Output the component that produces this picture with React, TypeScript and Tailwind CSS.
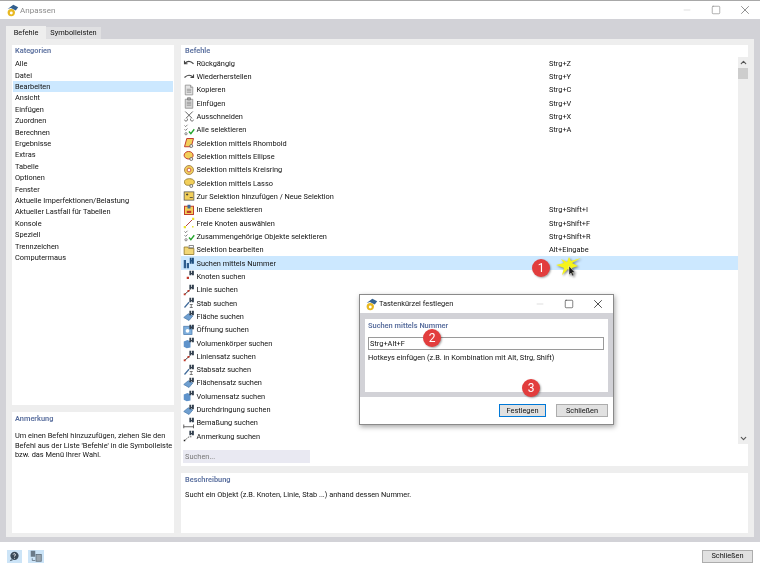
import React from "react";
import { X, Minus, Square, ChevronUp, ChevronDown } from "lucide-react";

const kategorien = [
  "Alle",
  "Datei",
  "Bearbeiten",
  "Ansicht",
  "Einfügen",
  "Zuordnen",
  "Berechnen",
  "Ergebnisse",
  "Extras",
  "Tabelle",
  "Optionen",
  "Fenster",
  "Aktuelle Imperfektionen/Belastung",
  "Aktueller Lastfall für Tabellen",
  "Konsole",
  "Speziell",
  "Trennzeichen",
  "Computermaus",
];

const befehle: [string, string, string][] = [
  ["undo", "Rückgängig", "Strg+Z"],
  ["redo", "Wiederherstellen", "Strg+Y"],
  ["copy", "Kopieren", "Strg+C"],
  ["paste", "Einfügen", "Strg+V"],
  ["cut", "Ausschneiden", "Strg+X"],
  ["check", "Alle selektieren", "Strg+A"],
  ["rhomb", "Selektion mittels Rhomboid", ""],
  ["ellipse", "Selektion mittels Ellipse", ""],
  ["ring", "Selektion mittels Kreisring", ""],
  ["lasso", "Selektion mittels Lasso", ""],
  ["add", "Zur Selektion hinzufügen / Neue Selektion", ""],
  ["plane", "In Ebene selektieren", "Strg+Shift+I"],
  ["free", "Freie Knoten auswählen", "Strg+Shift+F"],
  ["check", "Zusammengehörige Objekte selektieren", "Strg+Shift+R"],
  ["edit", "Selektion bearbeiten", "Alt+Eingabe"],
  ["num", "Suchen mittels Nummer", ""],
  ["node", "Knoten suchen", ""],
  ["line", "Linie suchen", ""],
  ["bar", "Stab suchen", ""],
  ["face", "Fläche suchen", ""],
  ["open", "Öffnung suchen", ""],
  ["solid", "Volumenkörper suchen", ""],
  ["line", "Liniensatz suchen", ""],
  ["bar", "Stabsatz suchen", ""],
  ["face", "Flächensatz suchen", ""],
  ["solid", "Volumensatz suchen", ""],
  ["face", "Durchdringung suchen", ""],
  ["dim", "Bemaßung suchen", ""],
  ["note", "Anmerkung suchen", ""],
];

const Logo = () => (
  <svg width="13" height="13" viewBox="0 0 16 16">
    <circle cx="6.5" cy="10.5" r="4.5" fill="#e8b820" />
    <circle cx="6.5" cy="11" r="1.8" fill="#fff" />
    <path d="M2 6 L9 1 L15 4 L12 8 L6 5 Z" fill="#34618f" />
  </svg>
);

const Binoc = () => (
  <path d="M8.5 1h2.5v3h1V1h2.5v6h-2.5V5.5h-1V7H8.5z" fill="#33404f" />
);

const Icon: React.FC<{ kind: string }> = ({ kind }) => {
  const shape = () => {
    switch (kind) {
      case "undo":
        return <path d="M2 5v4h4M2.5 8.5C6 5 10 5 14 9" fill="none" stroke="#444" strokeWidth="1.5" />;
      case "redo":
        return <path d="M14 6v4h-4M13.5 9.5C10 6 6 6 2 10" fill="none" stroke="#444" strokeWidth="1.5" />;
      case "copy":
        return <path d="M3 1.5h7l3 3v10H3z M10 1.5v3h3 M5 7h6M5 9h6M5 11h6" fill="#e4e4e4" stroke="#8a8a8a" />;
      case "paste":
        return (
          <>
            <path d="M3 3h10v12H3z" fill="#d8d8d8" stroke="#8a8a8a" />
            <path d="M6 1h4v3H6z" fill="#aaa" stroke="#777" />
            <path d="M5 7h6M5 9h6M5 11h6" stroke="#888" />
          </>
        );
      case "cut":
        return <path d="M3 2l9 9M13 2L4 11M2 13a2 2 0 1 0 3-2M14 13a2 2 0 1 1-3-2" fill="none" stroke="#555" strokeWidth="1.2" />;
      case "check":
        return (
          <>
            <path d="M2 2l1.5 1.5L6 1M2 7l1.5 1.5L6 6" fill="none" stroke="#555" />
            <circle cx="4" cy="13" r="1.5" fill="none" stroke="#666" />
            <path d="M8 10l2.5 3L15 7" fill="none" stroke="#22a52a" strokeWidth="1.8" />
          </>
        );
      case "rhomb":
        return (
          <>
            <path d="M5 2h9l-3 11H2z" fill="#f2cf5a" stroke="#c0392b" strokeWidth="1.3" />
            <circle cx="11" cy="12" r="2" fill="#eee" stroke="#555" />
          </>
        );
      case "ellipse":
        return (
          <>
            <ellipse cx="7.5" cy="7" rx="6" ry="5" fill="#f2cf5a" stroke="#c0392b" strokeWidth="1.3" />
            <circle cx="11" cy="12" r="2" fill="#eee" stroke="#555" />
          </>
        );
      case "ring":
        return (
          <>
            <circle cx="8" cy="8" r="6" fill="#f2cf5a" stroke="#a85" strokeWidth="1.3" />
            <circle cx="8" cy="8" r="2.5" fill="#fff" stroke="#c0392b" />
          </>
        );
      case "lasso":
        return (
          <>
            <path d="M2 6c0-4 9-5 12-2s0 7-4 7-8 1-8-5z" fill="#f2cf5a" stroke="#998030" strokeWidth="1.2" />
            <circle cx="11" cy="12" r="2" fill="#eee" stroke="#555" />
          </>
        );
      case "add":
        return (
          <>
            <rect x="1.5" y="2.5" width="13" height="11" fill="#f2cf5a" stroke="#555" />
            <path d="M4 6h3M5.5 4.5v3M9 10h4" stroke="#333" />
          </>
        );
      case "plane":
        return (
          <>
            <rect x="2" y="3" width="12" height="11" fill="#f2cf5a" stroke="#c0392b" strokeWidth="1.3" />
            <rect x="6" y="1" width="4" height="5" fill="#3f6a9a" />
            <path d="M5 9h6v3H5z" fill="#c0392b" />
          </>
        );
      case "free":
        return (
          <>
            <path d="M3 13L13 3" stroke="#a33" strokeWidth="1.2" />
            <rect x="1" y="12" width="3" height="3" fill="#e8e030" />
            <rect x="12" y="1" width="3" height="3" fill="#e8e030" />
            <rect x="12" y="12" width="2" height="2" fill="#e8e030" />
          </>
        );
      case "edit":
        return (
          <>
            <path d="M1.5 4h5l1 2h7v8h-13z" fill="#f2d777" stroke="#8a7020" />
            <path d="M8 2h6v3H8z" fill="#fff" stroke="#666" />
          </>
        );
      case "num":
        return (
          <>
            <path d="M1 4h3v11H1zM5 8h3v7H5z" fill="#2d5d8e" />
            <path d="M9 1h2.5v3h.5V1h2.5v8H12V6h-.5v3H9z" fill="#1d4d7e" />
          </>
        );
      case "node":
        return (
          <>
            <Binoc />
            <rect x="5" y="9" width="3" height="3" fill="#c0392b" />
          </>
        );
      case "line":
        return (
          <>
            <Binoc />
            <path d="M2 14L10 7" stroke="#333" strokeWidth="1.2" />
            <rect x="1" y="12.5" width="2.5" height="2.5" fill="#c0392b" />
            <rect x="6" y="8" width="2.5" height="2.5" fill="#c0392b" />
          </>
        );
      case "bar":
        return (
          <>
            <Binoc />
            <path d="M2 14L8 7" stroke="#3f6a9a" strokeWidth="1.6" />
            <path d="M9 10h4M11 10v4M9 14h4" stroke="#555" />
          </>
        );
      case "face":
        return (
          <>
            <path d="M1 10l6-5 6 3-5 6z" fill="#6f9fd0" stroke="#4c7cae" />
            <Binoc />
          </>
        );
      case "open":
        return (
          <>
            <rect x="1" y="3" width="11" height="11" fill="#7fb0de" stroke="#4c7cae" />
            <circle cx="6" cy="9" r="2.5" fill="#fff" />
            <Binoc />
          </>
        );
      case "solid":
        return (
          <>
            <path d="M1 6l5-2 4 2v8l-5 1-4-2z" fill="#5f93cb" />
            <Binoc />
          </>
        );
      case "dim":
        return (
          <>
            <Binoc />
            <path d="M1 13h13M1 10v5M14 10v5" stroke="#333" />
          </>
        );
      case "note":
        return (
          <>
            <Binoc />
            <path d="M2 14L8 9h4" fill="none" stroke="#333" strokeDasharray="2 1" />
            <rect x="1" y="13" width="2" height="2" fill="#222" />
          </>
        );
      default:
        return null;
    }
  };
  return (
    <svg width="12" height="12" viewBox="0 0 16 16" className="shrink-0">
      {shape()}
    </svg>
  );
};

const Badge: React.FC<{ n: number; className: string }> = ({ n, className }) => (
  <div
    className={`absolute w-[18px] h-[18px] rounded-full bg-[#e23d3d] text-white text-[12px] flex items-center justify-center shadow-[1px_1px_2px_rgba(0,0,0,0.35)] ${className}`}
  >
    {n}
  </div>
);

const Heading: React.FC<{ children: React.ReactNode }> = ({ children }) => (
  <div className="text-[#5a6f9e] font-semibold leading-[10px]">{children}</div>
);

const Button: React.FC<{ label: string; className?: string }> = ({ label, className }) => (
  <div
    className={`h-[13px] flex items-center justify-center bg-[#e1e1e1] border border-[#adadad] text-[#111] ${className ?? ""}`}
  >
    {label}
  </div>
);

export default function App() {
  return (
    <div className="relative w-[760px] h-[570px] overflow-hidden flex flex-col bg-[#d2d2d7] text-[7.4px] text-[#111] font-['Roboto',sans-serif] border-t border-[#a8a8a8] blur-[0.25px]">
      <div className="h-[18px] bg-white flex items-center pl-[6px] shrink-0">
        <Logo />
        <span className="ml-[1px] mt-px text-[#8c8c8c] text-[8px]">Anpassen</span>
        <div className="ml-auto flex items-center pr-[8px] text-[#8a8a8a]">
          <Minus size={10} className="text-[#d8d8d8]" />
          <Square size={10} strokeWidth={1.6} className="ml-[19px]" />
          <X size={14} strokeWidth={1.6} className="ml-[17px]" />
        </div>
      </div>

      <div className="flex items-end pl-[6px] pt-[7px] shrink-0">
        <div className="w-[40px] h-[13px] bg-[#eeeeee] flex items-center justify-center">Befehle</div>
        <div className="w-[55px] h-[12px] bg-[#e0e0e2] flex items-center justify-center">Symbolleisten</div>
      </div>

      <div className="ml-[6px] mr-[6px] bg-[#eeeeee] h-[498px] shrink-0 pl-[6px] pr-[6px] pt-[6px] pb-[4px] flex gap-[7px]">
        <div className="w-[162px] flex flex-col gap-[7px]">
          <div className="h-[360px] bg-white pt-px">
            <div className="pl-[3px] mb-[2px]">
              <Heading>Kategorien</Heading>
            </div>
            <div className="px-px">
              {kategorien.map((k) => (
                <div
                  key={k}
                  className={`h-[11.41px] flex items-center pl-[2px] ${k === "Bearbeiten" ? "bg-[#cce8ff]" : ""}`}
                >
                  {k}
                </div>
              ))}
            </div>
          </div>
          <div className="flex-1 bg-white px-[3px] pt-[2px]">
            <Heading>Anmerkung</Heading>
            <div className="mt-[7px] leading-[9.7px] whitespace-nowrap">
              Um einen Befehl hinzuzufügen, ziehen Sie den
              <br />
              Befehl aus der Liste 'Befehle' in die Symbolleiste
              <br />
              bzw. das Menü Ihrer Wahl.
            </div>
          </div>
        </div>

        <div className="flex-1 flex flex-col gap-[7px]">
          <div className="h-[421px] bg-white relative flex flex-col">
            <div className="pl-[4px] pt-px mb-[0.5px]">
              <Heading>Befehle</Heading>
            </div>
            <div className="flex flex-1 min-h-0">
              <div className="w-[557px]">
                {befehle.map(([icon, name, key]) => (
                  <div
                    key={name}
                    className={`h-[13.33px] flex items-center pl-[2px] ${name === "Suchen mittels Nummer" ? "bg-[#cce8ff]" : ""}`}
                  >
                    <Icon kind={icon} />
                    <span className="ml-[1.5px] w-[352.5px]">{name}</span>
                    <span>{key}</span>
                  </div>
                ))}
              </div>
              <div className="w-[10px] h-[387px] bg-[#eeeeee] flex flex-col items-center">
                <div className="h-[11px] flex items-center shrink-0">
                  <ChevronUp size={9} strokeWidth={3} className="text-[#555]" />
                </div>
                <div className="w-[10px] h-[11px] bg-[#cdcdcd] shrink-0" />
                <div className="h-[11px] flex items-center mt-auto shrink-0">
                  <ChevronDown size={9} strokeWidth={3} className="text-[#555]" />
                </div>
              </div>
            </div>
            <div className="absolute left-[2px] bottom-[3px] w-[127px] h-[13px] bg-[#e9e9f2] text-[#777] flex items-center pl-[2px]">
              Suchen...
            </div>
          </div>
          <div className="flex-1 bg-white px-[4px] pt-[2px]">
            <Heading>Beschreibung</Heading>
            <div className="mt-[5px] leading-[10px]">Sucht ein Objekt (z.B. Knoten, Linie, Stab ...) anhand dessen Nummer.</div>
          </div>
        </div>
      </div>

      <div className="flex-1 mt-[5px] bg-white flex items-center pl-[7px] pr-[7px]">
        <div className="w-[15px] h-[13px] bg-[#cce4f7] flex items-center justify-center">
          <svg width="11" height="11" viewBox="0 0 16 16">
            <circle cx="8" cy="7" r="6" fill="#3b4a58" />
            <path d="M3 12l-2 3 5-2z" fill="#3b4a58" />
            <path d="M6 5c1-2 4-1 3 1l-1 2M8 10v1" stroke="#fff" strokeWidth="1.4" fill="none" />
          </svg>
        </div>
        <div className="ml-[6px] w-[16px] h-[13px] bg-[#cce4f7] flex items-center justify-center">
          <svg width="12" height="12" viewBox="0 0 16 16">
            <rect x="1" y="1" width="6" height="8" fill="#6a7a88" />
            <rect x="8" y="6" width="7" height="9" fill="#9aa5ae" stroke="#5a6a78" />
            <path d="M3 11v3h4" stroke="#5a6a78" fill="none" />
          </svg>
        </div>
        <Button label="Schließen" className="ml-auto w-[51px]" />
      </div>

      {/* Dialog */}
      <div className="absolute left-[359px] top-[293px] w-[255px] h-[131px] bg-white border border-[#8a8a8a] shadow-[1px_2px_5px_rgba(0,0,0,0.35)] flex flex-col">
        <div className="h-[18px] flex items-center pl-[5px] shrink-0">
          <Logo />
          <span className="ml-[1px]">Tastenkürzel festlegen</span>
          <div className="ml-auto flex items-center pr-[8px] text-[#444]">
            <Minus size={10} className="text-[#d8d8d8]" />
            <Square size={10} strokeWidth={1.6} className="ml-[19px]" />
            <X size={14} strokeWidth={1.6} className="ml-[17px]" />
          </div>
        </div>
        <div className="h-[84px] bg-[#d2d2d7] px-[5px] pt-[6px] pb-[5px] shrink-0">
          <div className="h-full bg-white px-[3px] pt-[2px]">
            <Heading>Suchen mittels Nummer</Heading>
            <div className="mt-[6px] h-[13px] border border-[#9a9a9a] flex items-center pl-px w-[236px]">
              Strg+Alt+F
            </div>
            <div className="mt-[3px] leading-[10px]">Hotkeys einfügen (z.B. in Kombination mit Alt, Strg, Shift)</div>
          </div>
        </div>
        <div className="flex-1 flex items-center justify-end gap-[10px] pr-[5px]">
          <div className="w-[47px] h-[13px] flex items-center justify-center bg-[#e1e1e1] border-[1.5px] border-[#0078d7]">
            Festlegen
          </div>
          <Button label="Schließen" className="w-[52px]" />
        </div>
      </div>

      <Badge n={1} className="left-[532px] top-[258px]" />
      <Badge n={2} className="left-[423px] top-[328px]" />
      <Badge n={3} className="left-[522px] top-[378px]" />

      {/* Cursor */}
      <svg
        className="absolute left-[556px] top-[256px] drop-shadow-[1px_1px_1px_rgba(0,0,0,0.5)]"
        width="26"
        height="21"
        viewBox="0 0 26 21"
      >
        <path
          d="M25 1L16 6L22 9L16 11L17 18L12 12L6 18L8 11L0 8L8 6L5 2L11 5L13 0L15 4Z"
          fill="#f6f41a"
        />
        <path d="M13 9V18L15 16L16.5 19L18 18.3L16.5 15.5H19Z" fill="#1d1d1d" stroke="#fff" strokeWidth="0.4" />
      </svg>
    </div>
  );
}
